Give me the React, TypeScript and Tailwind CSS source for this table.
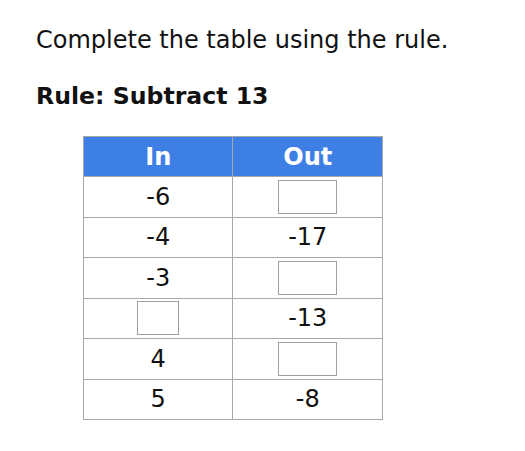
import React from "react";

const rows: { a: string | null; b: string | null }[] = [
  { a: "-6", b: null },
  { a: "-4", b: "-17" },
  { a: "-3", b: null },
  { a: null, b: "-13" },
  { a: "4", b: null },
  { a: "5", b: "-8" },
];

function Box({ w }: { w: number }) {
  return (
    <div
      className="mx-auto h-[34px] border border-[#a0a0a0] bg-white"
      style={{ width: w }}
    />
  );
}

export default function App() {
  return (
    <div
      className="w-[525px] h-[451px] bg-white text-[#111] pl-[36px] pt-[24px]"
      style={{ fontFamily: "'DejaVu Sans', Verdana, sans-serif" }}
    >
      <p className="text-[24px] leading-[32px]">Complete the table using the rule.</p>
      <p className="mt-[24px] text-[23.6px] leading-[32px] font-bold">Rule: Subtract 13</p>
      <table className="mt-[24px] ml-[47px] border-collapse w-[300px] text-[24px]">
        <thead>
          <tr className="bg-[#3e7fe6] text-white font-bold">
            <th className="w-[150px] h-[40px] border border-[#a8a8a8] font-bold p-0">In</th>
            <th className="w-[150px] h-[40px] border border-[#a8a8a8] font-bold p-0">Out</th>
          </tr>
        </thead>
        <tbody>
          {rows.map((r, i) => (
            <tr key={i} className="h-[40.5px]">
              <td className="border border-[#a8a8a8] text-center p-0">
                {r.a ?? <Box w={42} />}
              </td>
              <td className="border border-[#a8a8a8] text-center p-0">
                {r.b ?? <Box w={59} />}
              </td>
            </tr>
          ))}
        </tbody>
      </table>
    </div>
  );
}
